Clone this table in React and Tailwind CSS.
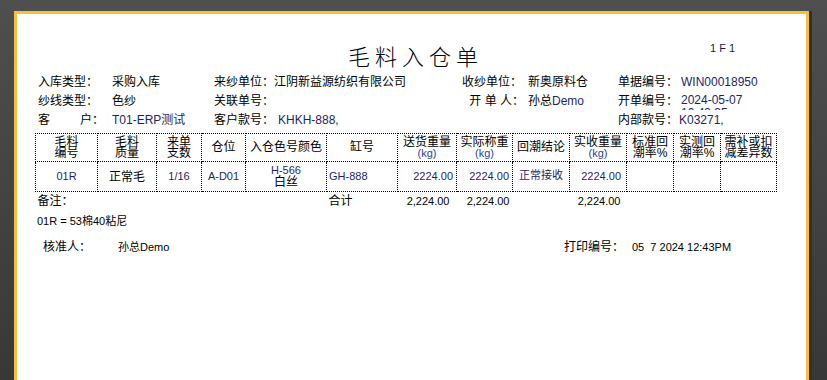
import React from 'react';

const navy = 'text-[#1d1f6b]';

const cols = [62, 59, 45, 44, 81, 71, 59, 56, 57, 57, 47, 47, 56];

const HeadCell = ({ children }) => (
  <th className="border border-dotted border-black p-0 font-normal text-[12px] leading-[11px] text-black text-center align-middle">
    {children}
  </th>
);

const Kg = () => <div className="text-[#2c3f96] text-[11px] leading-[11px]">(kg)</div>;

const DataCell = ({ children, className = '' }) => (
  <td className={`border border-dotted border-black p-0 text-[11px] ${navy} ${className}`}>{children}</td>
);

const InfoRow = ({ children }) => <div className="flex items-center h-[19px] text-[12px] text-black whitespace-nowrap">{children}</div>;

const WaterBill = () => {
  return (
    <div className="w-[827px] h-[380px] overflow-hidden bg-gradient-to-b from-[#4f4f4f] to-[#383838] font-['Liberation_Sans','Noto_Sans_CJK_SC',sans-serif]">
      <div className="ml-[14px] mt-[11px] w-[795px] h-[400px] bg-white border-[3px] border-b-0 border-[#f6c03a] shadow-[3px_0_0_#2f2f2f]">
        {/* Title */}
        <div className="flex h-[58px] pt-[32px] pl-[331px]">
          <div className="w-[362px] text-[22px] leading-[24px] tracking-[5px] font-light text-black">毛料入仓单</div>
          <div className="text-[11px] leading-[14px] -mt-[5px] text-[#1a1a4a]">1 F 1</div>
        </div>

        {/* Header info */}
        <div className="pl-[21px]">
          <InfoRow>
            <div className="w-[74px]">入库类型：</div>
            <div className="w-[102px]">采购入库</div>
            <div className="w-[248px]">来纱单位：江阴新益源纺织有限公司</div>
            <div className="w-[66px]">收纱单位：</div>
            <div className="w-[90px]">新奥原料仓</div>
            <div className="w-[63px]">单据编号：</div>
            <div className={navy}>WIN00018950</div>
          </InfoRow>
          <InfoRow>
            <div className="w-[74px]">纱线类型：</div>
            <div className="w-[102px]">色纱</div>
            <div className="w-[248px]">关联单号：</div>
            <div className="w-[62px] mr-[4px] text-right">开 单 人：</div>
            <div className="w-[90px]">孙总<span className={navy}>Demo</span></div>
            <div className="w-[63px]">开单编号：</div>
            <div className={`h-[19px] overflow-hidden pt-[3px] leading-[13px] ${navy}`}>
              <div>2024-05-07</div>
              <div>10:43:35</div>
            </div>
          </InfoRow>
          <InfoRow>
            <div className="w-[74px] flex"><span className="w-[42px]">客</span>户：</div>
            <div className={`w-[102px] ${navy}`}>T01-ERP测试</div>
            <div className="w-[64px]">客户款号：</div>
            <div className={`w-[340px] ${navy}`}>KHKH-888,</div>
            <div className="w-[61px]">内部款号：</div>
            <div className={navy}>K03271,</div>
          </InfoRow>
        </div>

        {/* Detail table */}
        <div className="pl-[18px] mt-[4px]">
          <table className="table-fixed border-collapse w-[741px]">
            <colgroup>
              {cols.map((w, i) => (
                <col key={i} style={{ width: w }} />
              ))}
            </colgroup>
            <thead>
              <tr className="h-[28px]">
                <HeadCell>毛料<br />编号</HeadCell>
                <HeadCell>毛料<br />质量</HeadCell>
                <HeadCell>来单<br />支数</HeadCell>
                <HeadCell>仓位</HeadCell>
                <HeadCell>入仓色号颜色</HeadCell>
                <HeadCell>缸号</HeadCell>
                <HeadCell>送货重量<Kg /></HeadCell>
                <HeadCell>实际称重<Kg /></HeadCell>
                <HeadCell>回潮结论</HeadCell>
                <HeadCell>实收重量<Kg /></HeadCell>
                <HeadCell>标准回<br />潮率%</HeadCell>
                <HeadCell>实测回<br />潮率%</HeadCell>
                <HeadCell>需补或扣<br />减差异数</HeadCell>
              </tr>
            </thead>
            <tbody>
              <tr className="h-[30px]">
                <DataCell className="text-center">01R</DataCell>
                <DataCell className="text-center !text-black text-[12px]">正常毛</DataCell>
                <DataCell className="text-center">1/16</DataCell>
                <DataCell className="text-center">A-D01</DataCell>
                <DataCell className="text-center leading-[11px]">
                  <div>H-566</div>
                  <div className="text-black text-[12px] leading-[12px]">白丝</div>
                </DataCell>
                <DataCell className="pl-[2px]">GH-888</DataCell>
                <DataCell className="text-right pr-[3px]">2224.00</DataCell>
                <DataCell className="text-right pr-[3px]">2224.00</DataCell>
                <DataCell className="text-center align-top pt-[5px]">正常接收</DataCell>
                <DataCell className="text-right pr-[5px]">2224.00</DataCell>
                <DataCell />
                <DataCell />
                <DataCell />
              </tr>
            </tbody>
            <tfoot>
              <tr className="h-[18px] text-[11px] text-black">
                <td colSpan={5} className="p-0 pl-[2px] text-[12px]">备注：</td>
                <td className="p-0 pl-[2px] text-[12px]">合计</td>
                <td className="p-0 text-right pr-[7px]">2,224.00</td>
                <td className="p-0 text-right pr-[3px]">2,224.00</td>
                <td className="p-0" />
                <td className="p-0 text-right pr-[6px]">2,224.00</td>
                <td className="p-0" />
                <td className="p-0" />
                <td className="p-0" />
              </tr>
            </tfoot>
          </table>
        </div>

        {/* Notes */}
        <div className="pl-[20px] mt-[2px] h-[18px] flex items-center text-[11px] text-black">01R = 53棉40粘尼</div>

        <div className="pl-[26px] mt-[8px] h-[18px] flex items-center text-black whitespace-nowrap">
          <div className="w-[75px] text-[12px]">核准人：</div>
          <div className="w-[446px] text-[11px]">孙总Demo</div>
          <div className="w-[68px] text-[12px]">打印编号：</div>
          <div className="text-[11px]">05&nbsp;&nbsp;7 2024 12:43PM</div>
        </div>
      </div>
    </div>
  );
};

export default WaterBill;
